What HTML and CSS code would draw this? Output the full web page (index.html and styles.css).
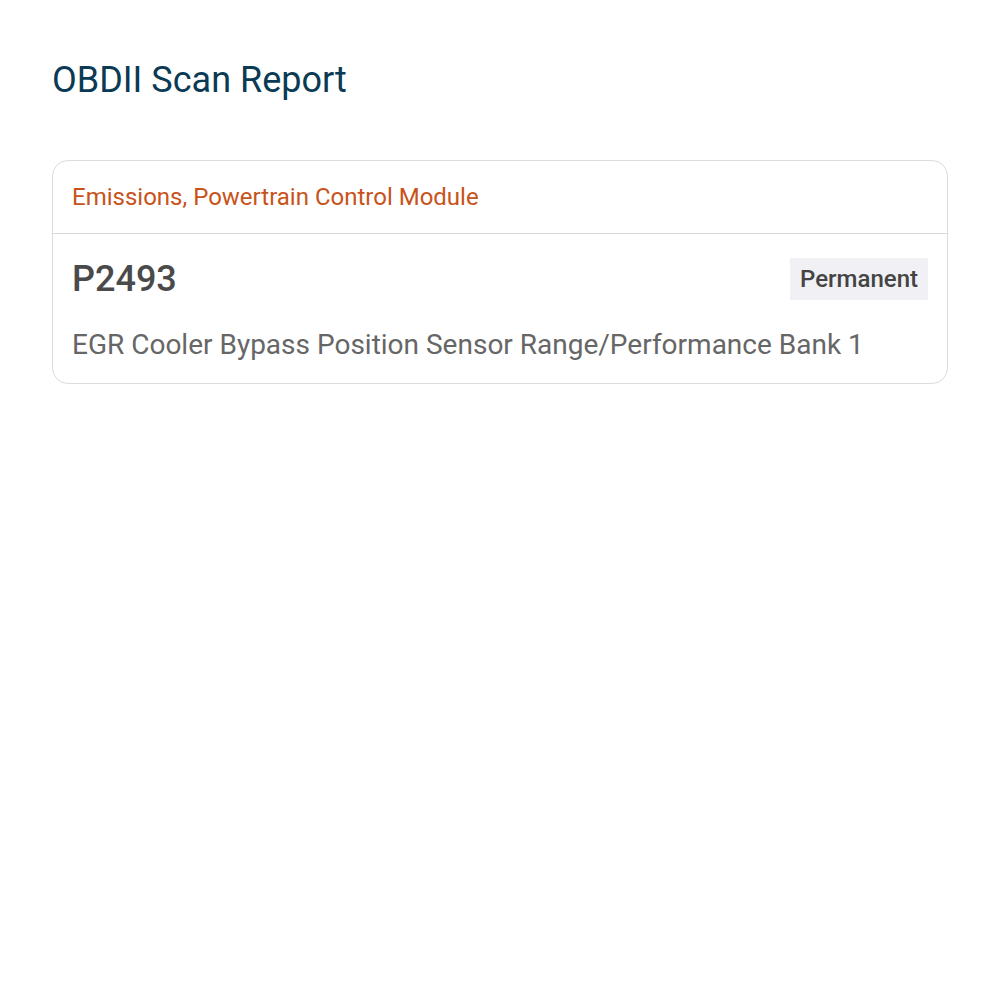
FILE: index.html
```html
<!DOCTYPE html>
<html lang="en">
<head>
  <meta charset="UTF-8">
  <meta name="viewport" content="width=device-width, initial-scale=1.0">
  <title>OBDII Scan Report</title>
  <link rel="stylesheet" href="styles.css">
</head>
<body>
<div class="container">
  <h1>OBDII Scan Report</h1>
  <div class="card">
    <div class="card-header">Emissions, Powertrain Control Module</div>
    <div class="card-body">
      <div class="code-row">
        <span class="code">P2493</span>
        <span class="badge">Permanent</span>
      </div>
      <p class="desc">EGR Cooler Bypass Position Sensor Range/Performance Bank 1</p>
    </div>
  </div>
</div>
</body>
</html>
```

FILE: styles.css
```css
body {
  font-family: Roboto, "Liberation Sans", sans-serif;
  margin: 0;
  padding: 0;
  background-color: #fff;
}

.container {
  padding: 56px 52px;
}

h1 {
  margin: 0 0 56px;
  font-size: 36px;
  font-weight: 400;
  line-height: 48px;
  color: #0b3a55;
}

.card {
  border: 1px solid #dcdcdc;
  border-radius: 16px;
}

.card-header {
  padding: 22px 19px;
  font-size: 24px;
  line-height: 28px;
  color: #c8531a;
  border-bottom: 1px solid #d8d8d8;
}

.card-body {
  padding: 24px 19px 20px;
}

.code-row {
  display: flex;
  justify-content: space-between;
  align-items: center;
  height: 42px;
}

.code {
  font-size: 36px;
  font-weight: 500;
  line-height: 42px;
  color: #4a4a4a;
}

.badge {
  background-color: #f1f1f5;
  padding: 7px 10px;
  font-size: 24px;
  font-weight: 500;
  line-height: 28px;
  color: #444;
}

.desc {
  margin: 27px 0 0;
  font-size: 28px;
  line-height: 36px;
  color: #666;
}
```
